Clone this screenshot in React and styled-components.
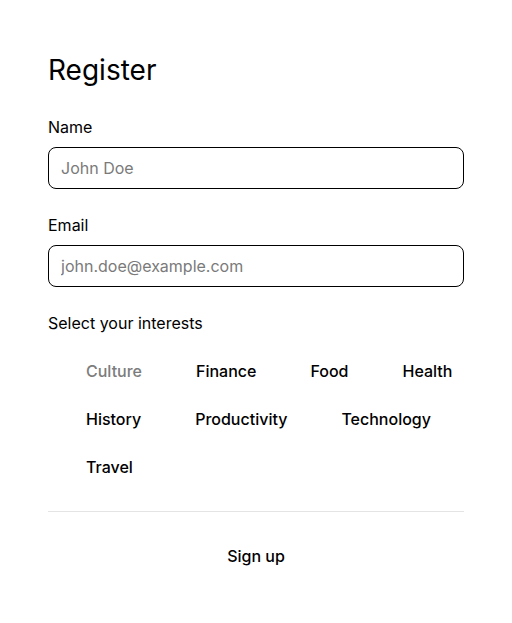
import React from "react";
import styled, { createGlobalStyle } from "styled-components";

const interests = [
  "Culture",
  "Finance",
  "Food",
  "Health",
  "History",
  "Productivity",
  "Technology",
  "Travel",
];

const App = () => {
  return (
    <>
      <GlobalStyle />
      <Page>
        <Form onSubmit={(e) => e.preventDefault()}>
          <Title>Register</Title>
          <Field>
            <Label htmlFor="name">Name</Label>
            <Input id="name" placeholder="John Doe" />
          </Field>
          <Field>
            <Label htmlFor="email">Email</Label>
            <Input id="email" type="email" placeholder="john.doe@example.com" />
          </Field>
          <Field>
            <Label as="span">Select your interests</Label>
            <InterestList>
              {interests.map((item, i) => (
                <Interest key={item} $muted={i === 0}>
                  {item}
                </Interest>
              ))}
            </InterestList>
          </Field>
          <Divider />
          <SubmitButton type="submit">Sign up</SubmitButton>
        </Form>
      </Page>
    </>
  );
};

const GlobalStyle = createGlobalStyle`
  body {
    margin: 0;
    background: #fff;
    font-family: Inter, "Noto Sans", sans-serif;
    color: #111;
  }
`;

const Page = styled.div`
  padding: 52px 48px 40px;
`;

const Form = styled.form`
  display: flex;
  flex-direction: column;
`;

const Title = styled.h1`
  margin: 0 0 27px;
  font-size: 28px;
  line-height: 36px;
  font-weight: 400;
  color: #000;
`;

const Field = styled.div`
  display: flex;
  flex-direction: column;
  gap: 8px;
  margin-bottom: 24px;
`;

const Label = styled.label`
  font-size: 16px;
  line-height: 24px;
  color: #000;
`;

const Input = styled.input`
  box-sizing: border-box;
  height: 42px;
  padding: 0 12px;
  border: 1px solid #000;
  border-radius: 8px;
  font-family: inherit;
  font-size: 16px;
  color: #000;
  outline: none;
  &::placeholder {
    color: #7a7a7a;
  }
`;

const InterestList = styled.ul`
  display: flex;
  flex-wrap: wrap;
  column-gap: 54px;
  row-gap: 24px;
  margin: 16px 0 8px;
  padding: 0 0 0 38px;
  list-style: none;
`;

const Interest = styled.li`
  font-size: 16px;
  line-height: 24px;
  font-weight: 500;
  color: ${(p) => (p.$muted ? "#7c7c7c" : "#000")};
`;

const Divider = styled.hr`
  margin: 0;
  border: 0;
  border-top: 1px solid #e4e4e4;
`;

const SubmitButton = styled.button`
  margin-top: 32px;
  align-self: center;
  background: none;
  border: 0;
  padding: 0;
  font-family: inherit;
  font-size: 16px;
  line-height: 24px;
  font-weight: 500;
  color: #000;
`;

export default App;
